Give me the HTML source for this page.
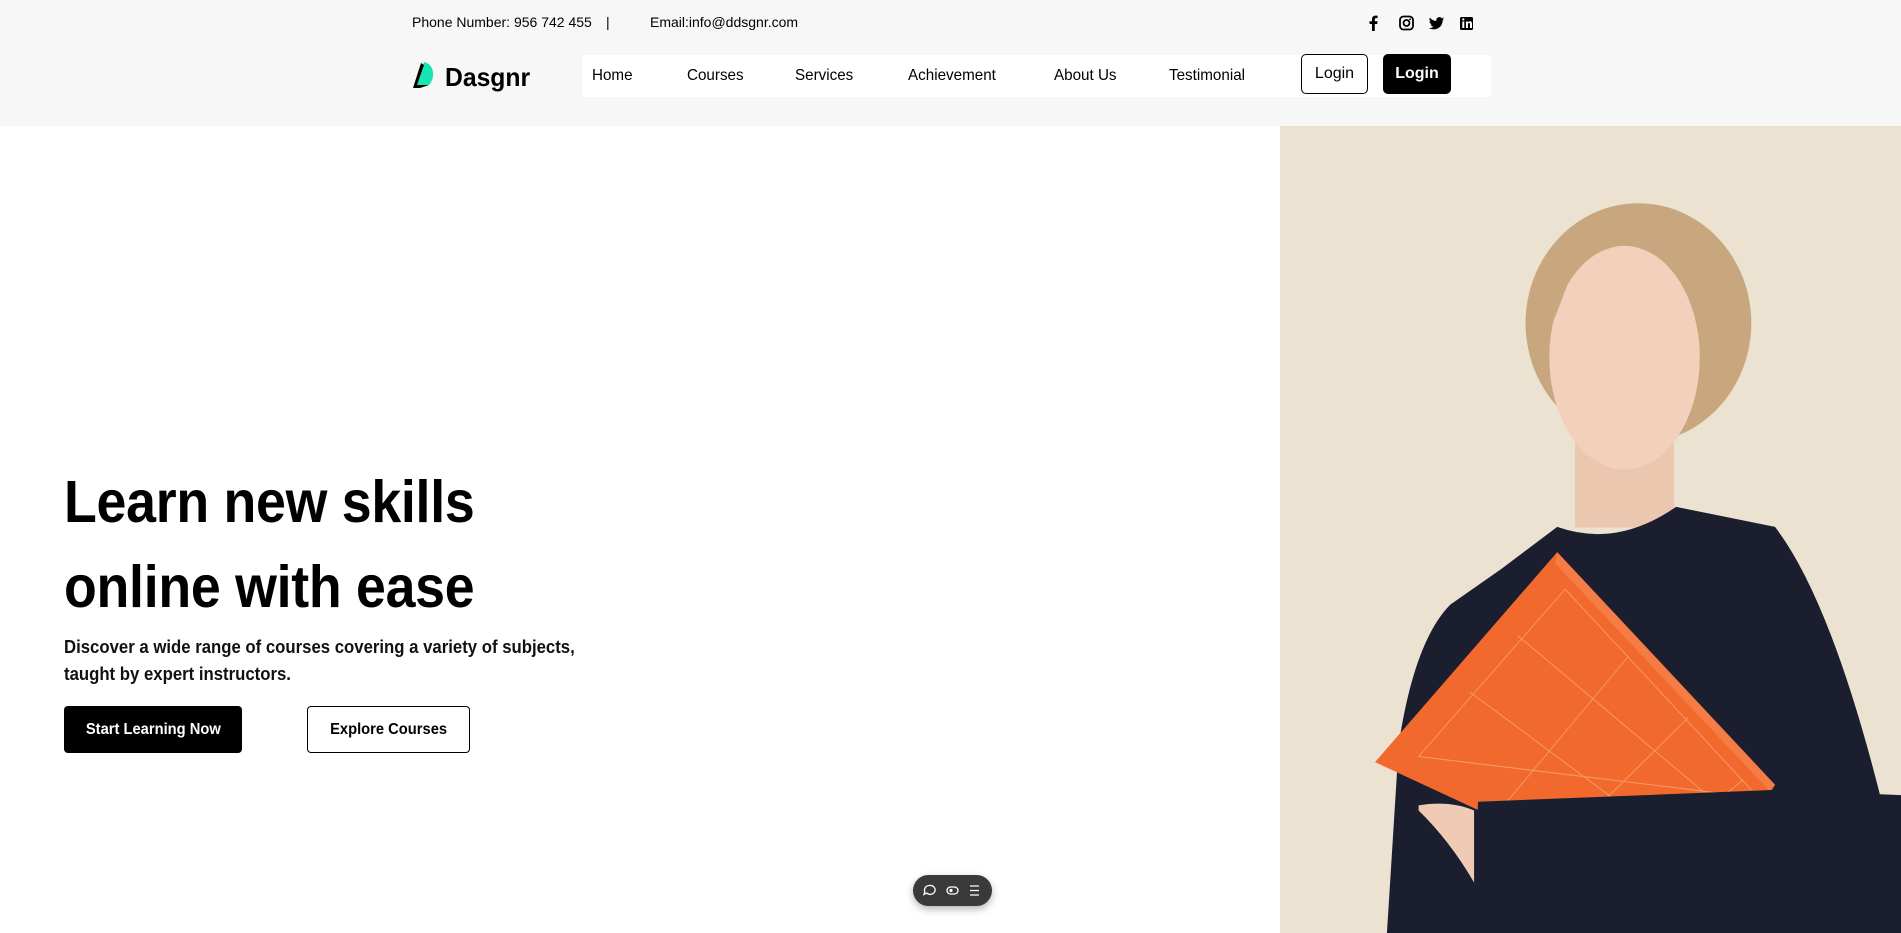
<!DOCTYPE html>
<html><head><meta charset="utf-8"><style>
*{margin:0;padding:0;box-sizing:border-box}
body{width:1901px;height:933px;overflow:hidden;background:#fff;font-family:"Liberation Sans",Arial,sans-serif;color:#000;position:relative}
.hdr{position:absolute;left:0;top:0;width:1901px;height:126px;background:#f7f7f7}
.abs{position:absolute;white-space:nowrap}
.top{font-size:14px;top:14px}
.nav{position:absolute;left:582px;top:55px;width:909px;height:42px;background:#fff}
.ni{position:absolute;top:67px;font-size:16px;transform:scaleX(.95);transform-origin:left}
.btn{position:absolute;border-radius:5px;font-size:16px;display:flex;align-items:center;justify-content:center}
h1{position:absolute;left:64px;top:460px;font-size:59px;font-weight:700;line-height:85px;letter-spacing:-0.3px;transform:scaleX(.91);transform-origin:left;white-space:nowrap}
.p{position:absolute;left:64px;top:634px;font-size:18px;font-weight:700;line-height:27px;color:#111;transform:scaleX(.93);transform-origin:left;white-space:nowrap}
.hb{position:absolute;top:706px;height:47px;border-radius:4px;font-size:16px;font-weight:700;display:flex;align-items:center;justify-content:center}
.hb span{display:inline-block;transform:scaleX(.92)}
.pill{position:absolute;left:913px;top:875px;width:79px;height:31px;border-radius:16px;background:#3a3a3a;box-shadow:0 3px 8px rgba(0,0,0,.3)}
</style></head><body>
<div class="hdr"></div>
<div class="abs top" style="left:412px">Phone Number: 956 742 455</div>
<div class="abs top" style="left:606px">|</div>
<div class="abs top" style="left:650px">Email:info@ddsgnr.com</div>
<svg class="abs" style="left:1364px;top:14px" width="112" height="18" viewBox="0 0 112 18">
<path d="M8 17V10H5.5V7.3H8V5.3C8 2.9 9.4 1.6 11.5 1.6c1 0 1.9.1 2.1.1v2.4h-1.4c-1.1 0-1.4.7-1.4 1.4v1.8h2.8l-.4 2.7h-2.4V17z" fill="#000"/>
<rect x="36" y="2.5" width="13" height="13" rx="3.5" fill="none" stroke="#000" stroke-width="1.8"/><circle cx="42.5" cy="9" r="3" fill="none" stroke="#000" stroke-width="1.8"/><circle cx="46" cy="5.3" r=".9"/>
<path d="M80 4.5c-.6.3-1.2.4-1.8.5.7-.4 1.1-1 1.4-1.7-.6.4-1.3.6-2 .8-1.2-1.3-3.2-1.3-4.4-.1-.8.8-1.1 1.9-.9 2.9-2.5-.1-4.9-1.3-6.4-3.3-.8 1.4-.4 3.2 1 4.1-.5 0-1-.2-1.4-.4 0 1.5 1 2.8 2.5 3.1-.5.1-.9.2-1.4.1.4 1.3 1.6 2.1 2.9 2.2-1.3 1-3 1.5-4.6 1.3 1.4.9 3.1 1.4 4.8 1.4 5.8 0 9-4.8 9-9v-.4c.6-.5 1.1-1 1.5-1.6z" fill="#000"/>
<rect x="96" y="3" width="13" height="13" rx="1.5" fill="#000"/><rect x="98.3" y="7.5" width="2" height="6.5" fill="#fff"/><circle cx="99.3" cy="5.4" r="1.1" fill="#fff"/><path d="M102 7.5h1.9v1c.4-.7 1.2-1.2 2.1-1.2 1.6 0 2 1 2 2.6V14h-2v-3.6c0-.8-.2-1.4-1-1.4s-1.1.6-1.1 1.4V14H102z" fill="#fff"/>
</svg>
<svg class="abs" style="left:412px;top:61px" width="26" height="29" viewBox="0 0 26 29"><path d="M12 1 C22 3 24 16 17 24 L5 24 Z" fill="#18e5b3"/><path d="M9 2 L1 27 L8 27 L17 24 L5 24 L12 4Z" fill="#000"/></svg>
<div class="abs" style="left:445px;top:62px;font-size:26px;font-weight:700;transform:scaleX(.95);transform-origin:left">Dasgnr</div>
<div class="nav"></div>
<div class="ni" style="left:592px">Home</div>
<div class="ni" style="left:687px">Courses</div>
<div class="ni" style="left:795px">Services</div>
<div class="ni" style="left:908px">Achievement</div>
<div class="ni" style="left:1054px">About Us</div>
<div class="ni" style="left:1169px">Testimonial</div>
<div class="btn" style="left:1301px;top:54px;width:67px;height:40px;border:1px solid #000;background:#fff">Login</div>
<div class="btn" style="left:1383px;top:54px;width:68px;height:40px;background:#000;color:#fff;font-weight:700">Login</div>
<h1>Learn new skills<br>online with ease</h1>
<div class="p">Discover a wide range of courses covering a variety of subjects,<br>taught by expert instructors.</div>
<div class="hb" style="left:64px;width:178px;background:#000;color:#fff"><span>Start Learning Now</span></div>
<div class="hb" style="left:307px;width:163px;border:1px solid #000;background:#fff"><span>Explore Courses</span></div>
<div class="pill"><svg width="79" height="31" viewBox="0 0 79 31"><path d="M16 10.5a5 4.5 0 1 1 -2.5 7.5l-2.5 1.5 .8-3a5 4.5 0 0 1 4.2-6z" fill="none" stroke="#fff" stroke-width="1.3"/><rect x="34" y="12" width="11" height="7" rx="3.5" fill="none" stroke="#fff" stroke-width="1.3"/><circle cx="38" cy="15.5" r="1.6" fill="#fff"/><path d="M57 11h9M57 15.5h9M57 20h9" stroke="#fff" stroke-width="1.3"/></svg></div>
<svg class="abs" style="left:1280px;top:126px" width="621" height="807" viewBox="0 0 1568 1568" preserveAspectRatio="none">
<rect width="1568" height="1568" fill="#ece2d2"/>
<ellipse cx="905" cy="383" rx="285" ry="233" fill="#c8a77e"/>
<rect x="745" y="560" width="250" height="220" fill="#ecc7b0"/>
<ellipse cx="870" cy="450" rx="190" ry="217" fill="#f1d0bc"/>
<path d="M690 380 Q740 200 930 215 Q1080 240 1085 380 L1060 280 Q940 180 760 240 Z" fill="#c8a77e"/>
<path d="M270 1568 L300 1200 Q340 1000 430 930 L560 860 L700 779 Q850 820 1000 740 L1250 779 Q1420 950 1568 1474 L1568 1568Z" fill="#1b1e2e"/>
<path d="M700 828 L1250 1280 L1170 1355 L500 1329 L240 1236Z" fill="#f2692e"/>
<path d="M700 828 L1250 1280 L1240 1295 L695 850Z" fill="#f7905a" opacity=".5"/>
<g stroke="#f8b080" stroke-width="2" opacity=".7" fill="none"><path d="M720 900 L1190 1290 M600 990 L1110 1320 M480 1100 L900 1340 M350 1225 L1150 1300 M720 900 L350 1225 M880 1030 L560 1325 M1030 1150 L780 1340 M1170 1270 L1050 1345"/></g>
<path d="M490 1568 L500 1313 L1250 1290 L1568 1300 L1568 1568Z" fill="#1b1e2e"/>
<path d="M350 1320 Q430 1310 490 1330 L490 1470 Q430 1390 350 1330Z" fill="#efcbb5"/>
</svg>
</body></html>
